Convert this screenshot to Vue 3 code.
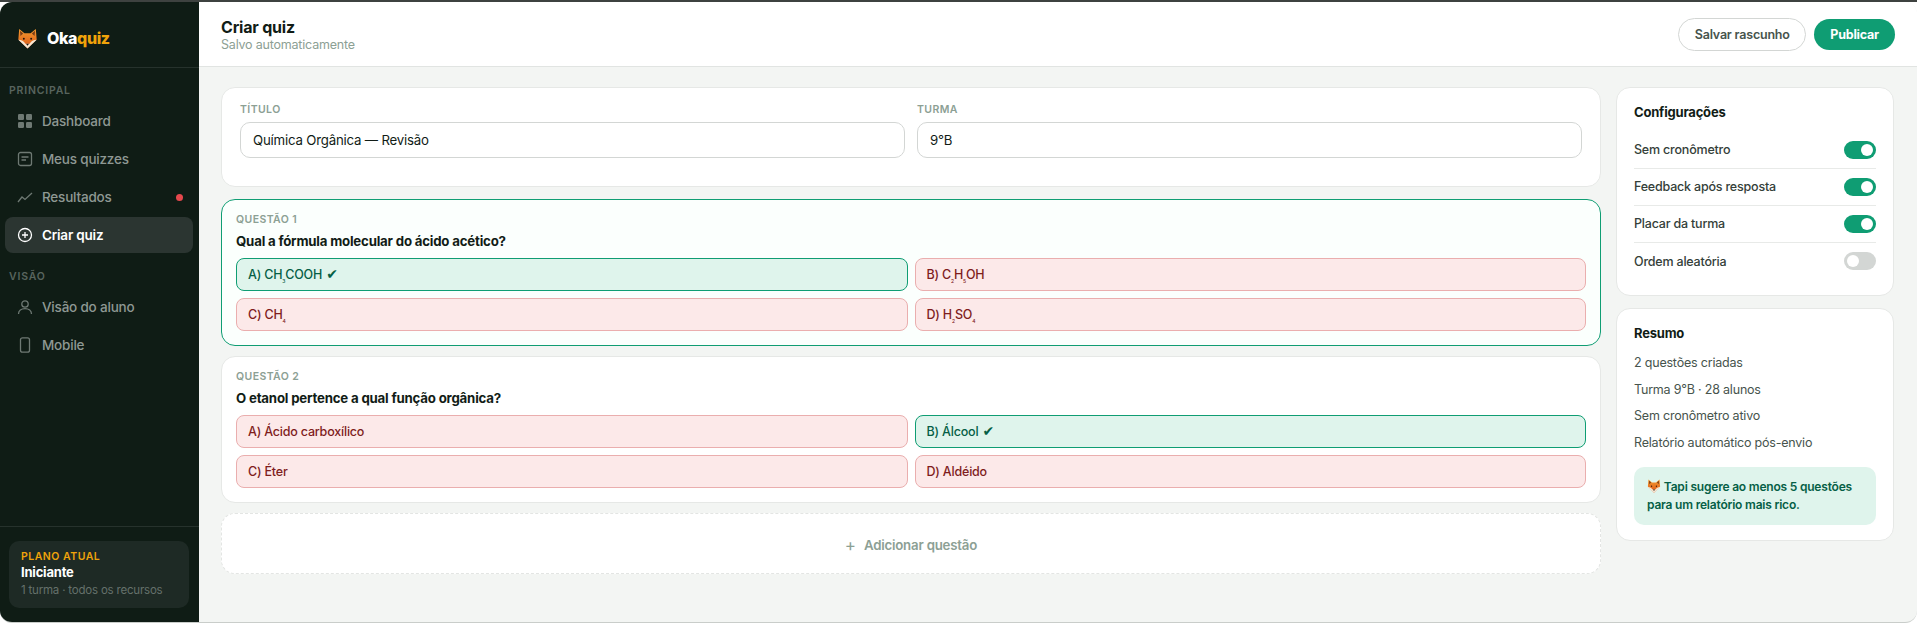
<script setup>
const navMain = [
  { label: 'Dashboard', icon: 'grid' },
  { label: 'Meus quizzes', icon: 'doc' },
  { label: 'Resultados', icon: 'chart', dot: true },
  { label: 'Criar quiz', icon: 'plus', active: true },
]
const navView = [
  { label: 'Visão do aluno', icon: 'user' },
  { label: 'Mobile', icon: 'phone' },
]
const settings = [
  { label: 'Sem cronômetro', on: true },
  { label: 'Feedback após resposta', on: true },
  { label: 'Placar da turma', on: true },
  { label: 'Ordem aleatória', on: false },
]
const summary = [
  '2 questões criadas',
  'Turma 9°B · 28 alunos',
  'Sem cronômetro ativo',
  'Relatório automático pós-envio',
]
const questions = [
  {
    tag: 'QUESTÃO 1',
    text: 'Qual a fórmula molecular do ácido acético?',
    active: true,
    options: [
      { parts: ['A) CH', '3', 'COOH'], right: true },
      { parts: ['B) C', '2', 'H', '5', 'OH'] },
      { parts: ['C) CH', '4'] },
      { parts: ['D) H', '2', 'SO', '4'] },
    ],
  },
  {
    tag: 'QUESTÃO 2',
    text: 'O etanol pertence a qual função orgânica?',
    options: [
      { parts: ['A) Ácido carboxílico'] },
      { parts: ['B) Álcool'], right: true },
      { parts: ['C) Éter'] },
      { parts: ['D) Aldéido'] },
    ],
  },
]
</script>

<template>
  <div class="strip"></div>
  <div class="app">
    <aside class="sidebar">
      <div class="brand">
        <svg class="fox" viewBox="0 0 24 24" width="21" height="21">
          <defs>
            <linearGradient id="foxFill" x1="0" y1="0" x2="0" y2="1">
              <stop offset="0" stop-color="#f39a2e" />
              <stop offset="1" stop-color="#dc5518" />
            </linearGradient>
          </defs>
          <g id="foxHead">
            <path d="M2.500 1L8.500 6h7l6-5 1 12L12 23.500 1.500 13z" fill="url(#foxFill)" />
            <path d="M3.300 3.200L7 6.200 4 9zM20.700 3.200L17 6.200 20 9z" fill="#7a3d17" />
            <path d="M1.500 13.500c3.500 0 6.500 1.500 8 4.500h5c1.500-3 4.500-4.500 8-4.500L12 23.500z" fill="#f7e6d2" />
            <circle cx="7.800" cy="12.300" r="1.100" fill="#24150c" />
            <circle cx="16.200" cy="12.300" r="1.100" fill="#24150c" />
            <path d="M10.200 18h3.600L12 20.400z" fill="#24150c" />
          </g>
        </svg>
        <span class="brand-name">Oka<span class="brand-accent">quiz</span></span>
      </div>

      <div class="nav-label">PRINCIPAL</div>
      <a v-for="item in navMain" :key="item.label" class="nav-item" :class="{ active: item.active }">
        <svg class="nav-icon" viewBox="0 0 16 16" width="16" height="16">
          <g v-if="item.icon === 'grid'" fill="currentColor" stroke="none">
            <rect x="1" y="1" width="6" height="6" rx="1.200" />
            <rect x="9" y="1" width="6" height="6" rx="1.200" />
            <rect x="1" y="9" width="6" height="6" rx="1.200" />
            <rect x="9" y="9" width="6" height="6" rx="1.200" />
          </g>
          <g v-else-if="item.icon === 'doc'">
            <rect x="1.500" y="1.500" width="13" height="13" rx="2" />
            <path d="M4.500 6h7M4.500 9h4.500" />
          </g>
          <path v-else-if="item.icon === 'chart'" d="M1 13l4-5 3 2.500L15 4" />
          <g v-else>
            <circle cx="8" cy="8" r="6.500" />
            <path d="M8 5v6M5 8h6" />
          </g>
        </svg>
        <span>{{ item.label }}</span>
        <i v-if="item.dot" class="dot"></i>
      </a>

      <div class="nav-label view-label">VISÃO</div>
      <a v-for="item in navView" :key="item.label" class="nav-item">
        <svg class="nav-icon" viewBox="0 0 16 16" width="16" height="16">
          <g v-if="item.icon === 'user'">
            <circle cx="8" cy="5" r="3.200" />
            <path d="M1.500 15c0-3.400 2.800-5.400 6.500-5.400s6.500 2 6.500 5.400" />
          </g>
          <rect v-else x="3.500" y="0.800" width="9" height="14.400" rx="2" />
        </svg>
        <span>{{ item.label }}</span>
      </a>

      <div class="side-foot">
        <div class="plan">
          <div class="plan-tag">PLANO ATUAL</div>
          <div class="plan-name">Iniciante</div>
          <div class="plan-desc">1 turma · todos os recursos</div>
        </div>
      </div>
    </aside>

    <main class="main">
      <header class="topbar">
        <div>
          <div class="page-title">Criar quiz</div>
          <div class="page-sub">Salvo automaticamente</div>
        </div>
        <div class="actions">
          <button class="btn ghost">Salvar rascunho</button>
          <button class="btn primary">Publicar</button>
        </div>
      </header>

      <div class="content">
        <section class="editor">
          <div class="card meta">
            <label class="field">
              <span class="field-label">TÍTULO</span>
              <span class="input">Química Orgânica — Revisão</span>
            </label>
            <label class="field">
              <span class="field-label">TURMA</span>
              <span class="input">9°B</span>
            </label>
          </div>

          <div v-for="q in questions" :key="q.tag" class="card question" :class="{ current: q.active }">
            <div class="q-tag">{{ q.tag }}</div>
            <div class="q-text">{{ q.text }}</div>
            <div class="options">
              <div v-for="(o, i) in q.options" :key="i" class="option" :class="{ right: o.right }">
                <template v-for="(p, j) in o.parts" :key="j">
                  <sub v-if="j % 2">{{ p }}</sub>
                  <template v-else>{{ p }}</template>
                </template>
                <span v-if="o.right" class="check"> ✔</span>
              </div>
            </div>
          </div>

          <div class="add">
            <span class="add-plus">+</span>
            <span>Adicionar questão</span>
          </div>
        </section>

        <aside class="panel">
          <div class="card side-card">
            <h3>Configurações</h3>
            <div v-for="s in settings" :key="s.label" class="setting">
              <span>{{ s.label }}</span>
              <span class="toggle" :class="{ on: s.on }"><i></i></span>
            </div>
          </div>
          <div class="card side-card summary">
            <h3>Resumo</h3>
            <p v-for="line in summary" :key="line">{{ line }}</p>
            <div class="tip">
              <svg class="fox-small" viewBox="0 0 24 24" width="14" height="14">
                <use href="#foxHead" />
              </svg>
              Tapi sugere ao menos 5 questões para um relatório mais rico.
            </div>
          </div>
        </aside>
      </div>
    </main>
  </div>
</template>

<style>
html, body {
  margin: 0;
  background: #fff;
}
</style>

<style scoped>
.strip {
  height: 2px;
  background: #3e4240;
}

.app {
  display: flex;
  box-sizing: border-box;
  height: 621px;
  border-bottom: 1px solid #c9cdca;
  border-radius: 12px;
  overflow: hidden;
  font-family: Inter, "Noto Sans", sans-serif;
  letter-spacing: -0.2px;
  color: #111c16;
  background: #f3f5f3;
}

.sidebar {
  width: 199px;
  flex: none;
  display: flex;
  flex-direction: column;
  background: #0f1c15;
}

.brand {
  display: flex;
  align-items: center;
  gap: 9px;
  box-sizing: border-box;
  height: 66px;
  padding: 7px 0 0 17px;
  border-bottom: 1px solid #26322c;
}

.brand-name {
  font-size: 16px;
  font-weight: 800;
  letter-spacing: -0.4px;
  color: #fff;
}

.brand-accent {
  color: #f0a30a;
}

.nav-label {
  margin: 16px 0 6px 9px;
  font-size: 10.5px;
  font-weight: 600;
  line-height: 13px;
  letter-spacing: 0.8px;
  color: #58645e;
}

.view-label {
  margin-top: 15px;
}

.nav-item {
  display: flex;
  align-items: center;
  gap: 9px;
  height: 36px;
  margin: 0 6px 2px 5px;
  padding: 0 10px 0 12px;
  border-radius: 8px;
  font-size: 13.5px;
  font-weight: 500;
  color: #8e9893;
}

.nav-item.active {
  background: #2b3531;
  color: #fff;
  font-weight: 600;
}

.nav-icon {
  flex: none;
  fill: none;
  stroke: currentColor;
  stroke-width: 1.3;
  opacity: 0.75;
}

.nav-item.active .nav-icon {
  opacity: 1;
}

.dot {
  width: 7px;
  height: 7px;
  margin-left: auto;
  border-radius: 50%;
  background: #e5484d;
}

.side-foot {
  margin-top: auto;
  padding: 14px 10px 14px 9px;
  border-top: 1px solid #26322c;
}

.plan {
  padding: 9px 12px;
  height: 49px;
  border-radius: 10px;
  background: #1e2a25;
}

.plan-tag {
  font-size: 10.5px;
  font-weight: 600;
  line-height: 14px;
  letter-spacing: 0.5px;
  color: #f0a30a;
}

.plan-name {
  font-size: 13px;
  font-weight: 700;
  line-height: 17px;
  color: #fff;
}

.plan-desc {
  margin-top: 2px;
  font-size: 11.5px;
  line-height: 14px;
  color: #65716b;
}

.main {
  flex: 1;
  display: flex;
  flex-direction: column;
  min-width: 0;
}

.topbar {
  display: flex;
  align-items: center;
  justify-content: space-between;
  box-sizing: border-box;
  height: 65px;
  padding: 0 22px;
  background: #fff;
  border-bottom: 1px solid #e1e4e2;
}

.page-title {
  font-size: 16px;
  font-weight: 700;
  line-height: 20px;
}

.page-sub {
  font-size: 12.5px;
  line-height: 15px;
  color: #8ca094;
}

.actions {
  display: flex;
  align-items: center;
  gap: 8px;
}

.btn {
  padding: 0 16px;
  border-radius: 17px;
  font-family: inherit;
  font-size: 12.5px;
  font-weight: 600;
  letter-spacing: inherit;
}

.btn.ghost {
  height: 33px;
  padding: 0 15.5px;
  background: #fff;
  border: 1px solid #d3d6d4;
  color: #47544d;
}

.btn.primary {
  height: 31px;
  background: #0f9d73;
  border: 0;
  font-weight: 700;
  color: #fff;
}

.content {
  display: flex;
  gap: 15px;
  padding: 20px 23px 0 22px;
}

.editor {
  flex: 1;
  min-width: 0;
  display: flex;
  flex-direction: column;
  gap: 10px;
}

.panel {
  width: 278px;
  flex: none;
  display: flex;
  flex-direction: column;
  gap: 12.5px;
}

.card {
  box-sizing: border-box;
  background: #fff;
  border: 1px solid #e6e8e6;
  border-radius: 14px;
}

.meta {
  display: grid;
  grid-template-columns: 1fr 1fr;
  gap: 12px;
  height: 100px;
  padding: 15px 18px;
  margin-bottom: 2px;
}

.field {
  display: block;
}

.field-label {
  display: block;
  margin-bottom: 5px;
  font-size: 10.5px;
  font-weight: 600;
  letter-spacing: 0.4px;
  line-height: 14px;
  color: #8ca094;
}

.input {
  display: block;
  box-sizing: border-box;
  height: 36px;
  padding: 0 12px;
  border: 1px solid #d3d6d4;
  border-radius: 10px;
  font-size: 13.25px;
  line-height: 34px;
}

.question {
  height: 147px;
  padding: 13px 14px 0;
}

.question.current {
  border-color: #0f9d73;
  background: #fbfffd;
}

.q-tag {
  font-size: 10.5px;
  font-weight: 600;
  letter-spacing: 0.4px;
  line-height: 14px;
  color: #8ca094;
}

.q-text {
  margin: 5px 0 8px;
  font-size: 13.25px;
  font-weight: 700;
  line-height: 18px;
}

.options {
  display: grid;
  grid-template-columns: 1fr 1fr;
  gap: 7px;
}

.option {
  box-sizing: border-box;
  height: 33px;
  padding: 0 11px;
  border: 1px solid #eaaeae;
  border-radius: 8px;
  background: #fce9e9;
  font-size: 12.5px;
  font-weight: 500;
  line-height: 31px;
  color: #7f1d1d;
}

.option.right {
  border-color: #0f9d73;
  background: #dff4ec;
  color: #065f46;
}

.option sub {
  font-size: 5px;
  line-height: 0;
}

.check {
  font-family: "DejaVu Sans", sans-serif;
  font-size: 14px;
  font-weight: 400;
  line-height: 0;
}

.add {
  box-sizing: border-box;
  display: flex;
  align-items: center;
  justify-content: center;
  gap: 8px;
  height: 61px;
  padding-top: 2px;
  border: 1px dashed #e3e5e3;
  border-radius: 14px;
  background: #fff;
  font-size: 13.25px;
  font-weight: 600;
  color: #8ca094;
}

.add-plus {
  font-size: 17px;
  font-weight: 400;
}

.side-card {
  padding: 15px 17px;
}

.side-card h3 {
  margin: 0 0 10.5px;
  font-size: 13px;
  font-weight: 700;
  line-height: 18px;
}

.summary h3 {
  margin-bottom: 8px;
}

.setting {
  display: flex;
  align-items: center;
  justify-content: space-between;
  box-sizing: border-box;
  height: 37px;
  font-size: 12.5px;
  font-weight: 500;
  color: #344039;
  border-bottom: 1px solid #e8eae8;
}

.setting:last-child {
  border-bottom: 0;
}

.toggle {
  display: flex;
  align-items: center;
  justify-content: flex-start;
  box-sizing: border-box;
  width: 32px;
  height: 18px;
  padding: 0 3px;
  border-radius: 9px;
  background: #d3d6d4;
}

.toggle.on {
  justify-content: flex-end;
  background: #0f9d73;
}

.toggle i {
  width: 12px;
  height: 12px;
  border-radius: 50%;
  background: #fff;
}

.summary p {
  margin: 0;
  font-size: 12.5px;
  line-height: 26.5px;
  color: #47544d;
}

.tip {
  margin-top: 11px;
  padding: 11px 13px;
  border-radius: 10px;
  background: #dff4ec;
  font-size: 12px;
  font-weight: 600;
  line-height: 18px;
  color: #065f46;
}

.fox-small {
  vertical-align: -2px;
}
</style>
